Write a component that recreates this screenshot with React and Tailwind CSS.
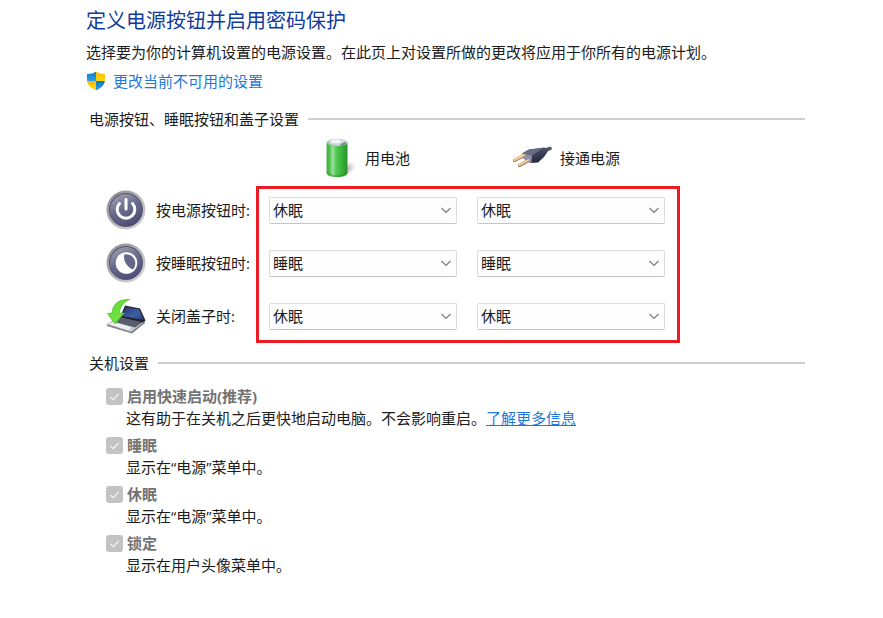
import React, { useState } from 'react';

const ShieldIcon = () => (
  <svg className="h-5 w-5 shrink-0" viewBox="0 0 20 20" aria-hidden="true">
    <defs>
      <clipPath id="shield">
        <path d="M10 0.5 C12.5 2.3 15.5 3 19 3 V8.5 C19 13.5 15.5 17 10 19.3 C4.5 17 1 13.5 1 8.5 V3 C4.5 3 7.5 2.3 10 0.5 Z" />
      </clipPath>
      <linearGradient id="shieldBlue" x1="0" y1="0" x2="0" y2="1">
        <stop offset="0" stopColor="#1577bd" />
        <stop offset="1" stopColor="#27a3ea" />
      </linearGradient>
      <linearGradient id="shieldGold" x1="0" y1="0" x2="0" y2="1">
        <stop offset="0" stopColor="#fbb90d" />
        <stop offset="1" stopColor="#fdd90c" />
      </linearGradient>
    </defs>
    <g clipPath="url(#shield)">
      <rect width="10" height="10" fill="url(#shieldBlue)" />
      <rect x="10" width="10" height="10" fill="url(#shieldGold)" />
      <rect y="10" width="10" height="10" fill="url(#shieldGold)" />
      <rect x="10" y="10" width="10" height="10" fill="url(#shieldBlue)" />
    </g>
  </svg>
);

const BatteryIcon = () => (
  <svg className="h-10 w-10 shrink-0" viewBox="-3 0 40 40" aria-hidden="true">
    <defs>
      <linearGradient id="cell" x1="0" x2="1">
        <stop offset="0" stopColor="#4fae4f" />
        <stop offset="0.12" stopColor="#48b848" />
        <stop offset="0.3" stopColor="#9be39a" />
        <stop offset="0.45" stopColor="#58c957" />
        <stop offset="0.75" stopColor="#36b236" />
        <stop offset="1" stopColor="#2a8f2e" />
      </linearGradient>
      <radialGradient id="cellShade">
        <stop offset="0" stopColor="#777" stopOpacity="0.6" />
        <stop offset="1" stopColor="#999" stopOpacity="0" />
      </radialGradient>
    </defs>
    <ellipse cx="27" cy="31" rx="10" ry="6.5" fill="url(#cellShade)" transform="rotate(-35 27 31)" />
    <path d="M6.500 4.5 V34 C6.500 37.5 11 39 17 39 C23 39 27.5 37.5 27.5 34 V4.5 Z" fill="url(#cell)" />
    <path d="M6.500 33 C9 36 12 37 17 37 C22 37 26 36 27.5 33 V35 C27 38 23 39.300 17 39.300 C11 39.300 7 38 6.500 35 Z" fill="#1f7a24" opacity="0.35" />
    <ellipse cx="17" cy="4.500" rx="10.500" ry="3.700" fill="#9ccf9f" />
    <ellipse cx="17.500" cy="4.200" rx="8.500" ry="3" fill="#d3d4e2" />
    <ellipse cx="16" cy="3.200" rx="5.500" ry="2" fill="#f6f6fb" />
    <path d="M20 6.500 L25 4 L26 5.500 L22 7.500 Z" fill="#7a7c9c" />
  </svg>
);

const PlugIcon = () => (
  <svg className="h-10 w-10 shrink-0" viewBox="-1 0 40 40" aria-hidden="true">
    <defs>
      <linearGradient id="plug" x1="0" y1="0" x2="0.3" y2="1">
        <stop offset="0" stopColor="#64677f" />
        <stop offset="0.45" stopColor="#42455f" />
        <stop offset="1" stopColor="#282a41" />
      </linearGradient>
    </defs>
    <path d="M30 13 C33 12 35 11 37 10.500" stroke="#56575e" strokeWidth="3.600" fill="none" strokeLinecap="round" />
    <path d="M9 15.500 L16 11.500 L31 9.500 C34 9.700 35.500 11.500 34.500 14 L31 19 L25 24.500 L17.500 25 L10 20 Z" fill="url(#plug)" />
    <path d="M9 15.500 L16 11.500 L30 10 L19 17.500 Z" fill="#686b84" />
    <path d="M9 15.500 L19 17.500 L18.500 25 L10 20 Z" fill="#8d90aa" />
    <path d="M1.500 22.500 L11 17.500" stroke="#a8805a" strokeWidth="3.200" strokeLinecap="round" />
    <path d="M1.500 22 L11 17" stroke="#f0d0a2" strokeWidth="2" strokeLinecap="round" />
    <path d="M6.500 27.500 L15.500 22.500" stroke="#a8805a" strokeWidth="3.200" strokeLinecap="round" />
    <path d="M6.500 27 L15.500 22" stroke="#f0d0a2" strokeWidth="2" strokeLinecap="round" />
  </svg>
);

const RoundButton = ({ id, children }) => (
  <svg className="h-10 w-10 shrink-0" viewBox="0 0 40 40" aria-hidden="true">
    <defs>
      <linearGradient id={`${id}-rim`} x1="0" y1="0" x2="1" y2="1">
        <stop offset="0" stopColor="#85858a" />
        <stop offset="0.5" stopColor="#b4b4b8" />
        <stop offset="1" stopColor="#dcdcdd" />
      </linearGradient>
      <linearGradient id={`${id}-face`} x1="0.2" y1="0" x2="0.7" y2="1">
        <stop offset="0" stopColor="#9d9eb2" />
        <stop offset="0.45" stopColor="#6a6c8c" />
        <stop offset="1" stopColor="#4a4c76" />
      </linearGradient>
    </defs>
    <circle cx="20" cy="20" r="19.500" fill={`url(#${id}-rim)`} />
    <circle cx="20" cy="20" r="17" fill="#55566e" />
    <circle cx="20" cy="20" r="16" fill={`url(#${id}-face)`} />
    {children}
  </svg>
);

const PowerIcon = () => (
  <RoundButton id="power">
    <path d="M13.500 13.500 A8.800 8.800 0 1 0 26.500 13.500" fill="none" stroke="#fff" strokeWidth="3" strokeLinecap="round" />
    <path d="M20 9.500 V19" stroke="#fff" strokeWidth="3" strokeLinecap="round" />
  </RoundButton>
);

const SleepIcon = () => (
  <RoundButton id="sleep">
    <circle cx="20.500" cy="20" r="10.800" fill="#fff" />
    <path d="M18.500 11.200 C25 10.500 29.300 15 29.300 20 C29.300 23 28.500 25 26.800 26.500 C21.500 24.500 16.500 18 18.500 11.200 Z" fill="#65678a" />
  </RoundButton>
);

const LidIcon = () => (
  <svg className="h-10 w-10 shrink-0" viewBox="0 0 40 40" aria-hidden="true">
    <defs>
      <linearGradient id="screen" x1="0" y1="0" x2="1" y2="1">
        <stop offset="0" stopColor="#24346f" />
        <stop offset="0.6" stopColor="#4160a6" />
        <stop offset="1" stopColor="#2a3a72" />
      </linearGradient>
      <linearGradient id="arrow" x1="0" y1="0" x2="1" y2="1">
        <stop offset="0" stopColor="#5fd433" />
        <stop offset="0.6" stopColor="#6fe23f" />
        <stop offset="1" stopColor="#37b81b" />
      </linearGradient>
    </defs>
    <path d="M1 28 L25 35.500 L39 25 V27 L26 37.500 L1 30 Z" fill="#7f818a" />
    <path d="M1 28 L12 20 L39 25 L25 35.500 Z" fill="#c9cbd3" />
    <path d="M13 21.500 L37 26 L29 31.500 L9 26 Z" fill="#595d6b" />
    <path d="M7 26 L2.500 28 L22 34 L25.500 31.500 Z" fill="#f0f0f4" />
    <path d="M19 9.500 L34 12.500 L39.500 24.500 L37 26.500 L14 21.500 Z" fill="#23242e" />
    <path d="M20 10.800 L33 13.500 L37.800 24 L16 20 Z" fill="url(#screen)" />
    <path d="M23.500 3.500 C13 2.500 6.500 8 6 17 L1.500 17.500 L9 28 L18.500 17 L13.500 17 C14 11 17 6.500 23.500 3.500 Z" fill="url(#arrow)" stroke="#3fae28" strokeWidth="0.600" />
  </svg>
);

const SectionTitle = ({ children }) => (
  <div className="flex items-center gap-[9px] pl-[3px]">
    <h2>{children}</h2>
    <div className="h-0.5 flex-1 bg-[#cfcfcf]" />
  </div>
);

const ActionSelect = ({ label, initial }) => {
  const [value, setValue] = useState(initial);

  return (
    <div className="relative">
      <select
        aria-label={label}
        value={value}
        onChange={(e) => setValue(e.target.value)}
        className="block h-[27px] w-full appearance-none rounded-xs border border-[#dcdcdc] border-b-[#c6c6c6] bg-[#fdfdfd] pr-6 pb-0.5 pl-[3px] text-[15px] leading-[22px]"
      >
        <option>不采取任何操作</option>
        <option>睡眠</option>
        <option>休眠</option>
        <option>关机</option>
      </select>
      <svg
        className="pointer-events-none absolute top-[7px] right-[5px] h-3 w-3"
        viewBox="0 0 12 12"
        fill="none"
        stroke="#7d7d7d"
        aria-hidden="true"
      >
        <path d="M1.500 4 L6 8.500 L10.500 4" strokeWidth="1.200" />
      </svg>
    </div>
  );
};

const ShutdownOption = ({ id, title, children }) => (
  <div>
    <div className="flex items-center gap-1">
      <span className="relative">
        <input
          id={id}
          type="checkbox"
          defaultChecked
          disabled
          className="block h-[17px] w-[17px] appearance-none rounded-[3px] bg-[#c3c3c3]"
        />
        <svg
          className="pointer-events-none absolute inset-0 h-[17px] w-[17px]"
          viewBox="0 0 16 16"
          fill="none"
          stroke="#f7f7f7"
          aria-hidden="true"
        >
          <path d="M4 8.300 L6.800 11 L12 5.500" strokeWidth="1.100" />
        </svg>
      </span>
      <label htmlFor={id} className="font-bold text-[#737373]">{title}</label>
    </div>
    <p className="pl-5">{children}</p>
  </div>
);

const actions = [
  { label: '按电源按钮时:', icon: PowerIcon, value: '休眠' },
  { label: '按睡眠按钮时:', icon: SleepIcon, value: '睡眠' },
  { label: '关闭盖子时:', icon: LidIcon, value: '休眠' },
];

const menuOptions = [
  { id: 'sleep-option', title: '睡眠', text: '显示在“电源”菜单中。' },
  { id: 'hibernate-option', title: '休眠', text: '显示在“电源”菜单中。' },
  { id: 'lock-option', title: '锁定', text: '显示在用户头像菜单中。' },
];

export default function App() {
  return (
    <main
      lang="zh-CN"
      className="min-h-screen bg-white pt-1.5 pr-[78px] pb-10 pl-[86px] font-['Open_Sans','Noto_Sans_CJK_SC',sans-serif] text-[15px] leading-[22px] text-[#1c1c1c]"
    >
      <h1 className="text-xl leading-[30px] text-[#123c9c]">定义电源按钮并启用密码保护</h1>
      <p className="mt-[5px]">
        选择要为你的计算机设置的电源设置。在此页上对设置所做的更改将应用于你所有的电源计划。
      </p>
      <a href="#unlock" className="mt-[7px] flex w-fit items-center gap-[7px] text-[#1f78d8]">
        <ShieldIcon />
        更改当前不可用的设置
      </a>

      <section className="mt-4">
        <SectionTitle>电源按钮、睡眠按钮和盖子设置</SectionTitle>

        {/* Power source headings */}
        <div className="mt-2 flex">
          <div className="w-[170px] shrink-0" />
          <div className="grid max-w-[424px] flex-1 grid-cols-2 gap-5 pr-[15px] pl-[13px]">
            <div className="flex items-center gap-2 pl-12">
              <BatteryIcon />
              用电池
            </div>
            <div className="flex items-center gap-2 pl-[35px]">
              <PlugIcon />
              接通电源
            </div>
          </div>
        </div>

        <div className="mt-2 flex">
          <div className="flex w-[170px] shrink-0 flex-col gap-[13px] pt-1 pl-5">
            {actions.map(({ label, icon: Icon }) => (
              <div key={label} className="flex items-center gap-2.5 whitespace-nowrap">
                <Icon />
                {label}
              </div>
            ))}
          </div>
          <div className="grid max-w-[424px] flex-1 grid-cols-2 content-start gap-x-5 gap-y-[26px] border-3 border-[#ec1c24] pt-2 pr-3 pb-2.5 pl-2.5">
            {actions.map(({ label, value }) => (
              <React.Fragment key={label}>
                <ActionSelect label={`${label} 用电池`} initial={value} />
                <ActionSelect label={`${label} 接通电源`} initial={value} />
              </React.Fragment>
            ))}
          </div>
        </div>
      </section>

      <section className="mt-[9px]">
        <SectionTitle>关机设置</SectionTitle>
        <div className="mt-[11px] flex flex-col gap-[5px] pl-5">
          <ShutdownOption id="fast-startup" title="启用快速启动(推荐)">
            这有助于在关机之后更快地启动电脑。不会影响重启。
            <a href="#learn-more" className="text-[#1f78d8] underline">了解更多信息</a>
          </ShutdownOption>
          {menuOptions.map((option) => (
            <ShutdownOption key={option.id} id={option.id} title={option.title}>
              {option.text}
            </ShutdownOption>
          ))}
        </div>
      </section>
    </main>
  );
}
